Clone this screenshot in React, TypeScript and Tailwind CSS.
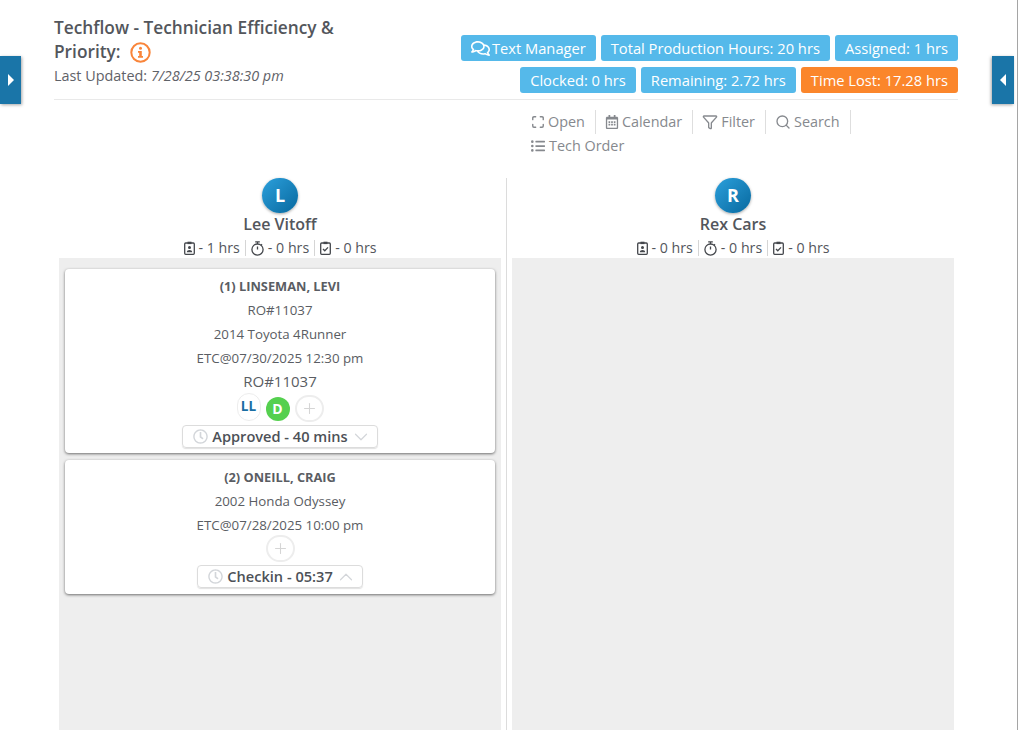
import { ChevronDown, ChevronUp, Filter, Maximize, Plus, Search } from "lucide-react";
import { FaRegCalendarAlt, FaRegClock, FaRegComments, FaListUl } from "react-icons/fa";
import type { ReactNode } from "react";

function Pill({ children, orange }: { children: ReactNode; orange?: boolean }) {
  return (
    <span
      className={`flex h-[26px] items-center rounded-[3px] px-[10px] text-[14.7px] text-white ${
        orange ? "bg-[#fb862b]" : "bg-[#55b9ea]"
      }`}
    >
      {children}
    </span>
  );
}

function ToolItem({ icon, label, last }: { icon: ReactNode; label: string; last?: boolean }) {
  return (
    <span className={`flex h-6 items-center gap-[3px] px-[10px] text-[14.4px] text-[#86898e] ${last ? "" : "border-r border-[#dedede]"}`}>
      {icon}
      {label}
    </span>
  );
}

function ClipboardUser() {
  return (
    <svg width="11" height="14" viewBox="0 0 11 14" fill="none" stroke="#44474c" strokeWidth="1.3">
      <rect x="0.7" y="2" width="9.6" height="11.3" rx="1" />
      <rect x="3.5" y="0.7" width="4" height="2.4" fill="#44474c" stroke="none" />
      <circle cx="5.5" cy="6.5" r="1.5" fill="#44474c" stroke="none" />
      <path d="M2.8 11.2c0-3 5.4-3 5.4 0z" fill="#44474c" stroke="none" />
    </svg>
  );
}

function Stopwatch() {
  return (
    <svg width="13" height="15" viewBox="0 0 13 15" fill="none" stroke="#44474c" strokeWidth="1.3">
      <circle cx="6.5" cy="8.6" r="5.6" />
      <path d="M4.2 0.8h4.6M6.5 0.8v2.2M6.5 8.6V5.4M11 3.2l-1 1" />
    </svg>
  );
}

function ClipboardTick() {
  return (
    <svg width="11" height="14" viewBox="0 0 11 14" fill="none" stroke="#44474c" strokeWidth="1.3">
      <rect x="0.7" y="2" width="9.6" height="11.3" rx="1" />
      <rect x="3.5" y="0.7" width="4" height="2.4" fill="#44474c" stroke="none" />
      <path d="M3 8l1.8 1.8L8 6.4" />
    </svg>
  );
}

function InfoIcon() {
  return (
    <svg width="21" height="21" viewBox="0 0 21 21" className="ml-[9px] inline -translate-y-[1px]">
      <circle cx="10.5" cy="10.5" r="9.2" fill="none" stroke="#f9853a" strokeWidth="2" />
      <circle cx="10.5" cy="6.3" r="1.5" fill="#f9853a" />
      <path d="M8 9h3.8v5h1.2v1.8H8V14h1.2v-3.2H8z" fill="#f9853a" />
    </svg>
  );
}

function Stats({ hours }: { hours: number }) {
  return (
    <div className="flex items-center justify-center text-[14.2px] leading-[16px] text-[#53565c]">
      <span className="flex items-center gap-[4px] border-r border-[#d5d5d5] pr-[5px]">
        <ClipboardUser />- {hours} hrs
      </span>
      <span className="flex items-center gap-[4px] border-r border-[#d5d5d5] px-[5px]">
        <Stopwatch />- 0 hrs
      </span>
      <span className="flex items-center gap-[4px] pl-[5px]">
        <ClipboardTick />- 0 hrs
      </span>
    </div>
  );
}

function Avatar({ letter }: { letter: string }) {
  return (
    <div className="flex h-[35px] w-9 items-center justify-center rounded-full bg-gradient-to-br from-[#2ba0dc] to-[#06699f] text-[18px] font-bold text-white shadow-[0_1px_3px_rgba(0,0,0,0.35)]">
      {letter}
    </div>
  );
}

function AddCircle() {
  return (
    <span className="flex h-[27px] w-[29px] items-center justify-center rounded-full border-2 border-[#ededed] bg-white text-[#d5d5d5]">
      <Plus size={17} strokeWidth={1.5} />
    </span>
  );
}

function StatusButton({ label, up }: { label: string; up?: boolean }) {
  return (
    <div className="mx-auto flex h-[23px] w-fit items-center gap-[4px] rounded-[4px] border border-[#dcdcdc] pr-[5px] pl-[10px] text-[14.6px] font-semibold text-[#4d5157] shadow-[0_1px_1px_rgba(0,0,0,0.12)]">
      <FaRegClock size={15} className="text-[#d3d6da]" />
      {label}
      {up ? (
        <ChevronUp size={22} strokeWidth={1.3} className="-ml-[2px] text-[#d3d6da]" />
      ) : (
        <ChevronDown size={22} strokeWidth={1.3} className="-ml-[2px] text-[#d3d6da]" />
      )}
    </div>
  );
}

function Card({ children, className }: { children: ReactNode; className?: string }) {
  return (
    <div className={`rounded-[4px] bg-white pt-[5px] text-center text-[13.3px] text-[#5a5d63] shadow-[0_1px_3px_rgba(0,0,0,0.55)] ${className}`}>
      {children}
    </div>
  );
}

function Line({ children, bold }: { children: ReactNode; bold?: boolean }) {
  return <div className={`h-6 leading-6 ${bold ? "text-[12.8px] font-bold" : ""}`}>{children}</div>;
}

export default function App() {
  return (
    <div className="relative h-[730px] overflow-hidden border-r border-[#a5a5a5] bg-white pl-[54px] pr-[59px] font-['Open_Sans',sans-serif]">
      <div className="absolute top-[56px] left-0 flex h-12 w-[21px] items-center justify-center bg-[#1a75a8] shadow-[1px_1px_3px_rgba(0,0,0,0.35)]">
        <span className="border-y-[6px] border-l-[6px] border-y-transparent border-l-white" />
      </div>
      <div className="absolute top-[56px] left-[992px] flex h-12 w-[22px] items-center justify-center bg-[#1a75a8] shadow-[-1px_1px_3px_rgba(0,0,0,0.35)]">
        <span className="border-y-[6px] border-r-[6px] border-y-transparent border-r-white" />
      </div>

      <header className="flex justify-between border-b border-[#e9e9e9] pt-[16px] pb-[6px]">
        <div className="w-[300px]">
          <h1 className="text-[17.3px] leading-[24px] font-semibold text-[#53565c]">
            Techflow - Technician Efficiency &amp; Priority:
            <InfoIcon />
          </h1>
          <p className="mt-[1px] text-[14.4px] leading-[22px] text-[#5f6268]">
            Last Updated: <em>7/28/25 03:38:30 pm</em>
          </p>
        </div>
        <div className="flex flex-col items-end gap-[6px] pt-[19px]">
          <div className="flex gap-[5px]">
            <Pill>
              <FaRegComments size={19} className="mr-[2px]" />
              Text Manager
            </Pill>
            <Pill>Total Production Hours: 20 hrs</Pill>
            <Pill>Assigned: 1 hrs</Pill>
          </div>
          <div className="flex gap-[5px]">
            <Pill>Clocked: 0 hrs</Pill>
            <Pill>Remaining: 2.72 hrs</Pill>
            <Pill orange>Time Lost: 17.28 hrs</Pill>
          </div>
        </div>
      </header>

      <div className="ml-[467px] flex flex-wrap pt-[10px]">
        <ToolItem icon={<Maximize size={14} strokeWidth={2.4} />} label="Open" />
        <ToolItem icon={<FaRegCalendarAlt size={14} className="-ml-[1px]" />} label="Calendar" />
        <ToolItem icon={<Filter size={16} strokeWidth={2} className="-ml-[1px]" />} label="Filter" />
        <ToolItem icon={<Search size={16} strokeWidth={2} className="-ml-[1px]" />} label="Search" />
        <div className="w-full">
          <span className="flex h-6 items-center gap-[4px] px-[10px] text-[14.4px] text-[#86898e]">
            <FaListUl size={14} />
            Tech Order
          </span>
        </div>
      </div>

      <div className="mt-[20px] grid h-[552px] grid-cols-[453px_451px]">
        <section className="flex flex-col border-r border-[#dcdcdc] pl-[5px] pr-[5px]">
          <div className="flex flex-col items-center">
            <Avatar letter="L" />
            <div className="-mt-[1px] text-[16px] leading-[24px] font-semibold text-[#53565c]">Lee Vitoff</div>
            <div className="mt-[4px] h-[18px]">
              <Stats hours={1} />
            </div>
          </div>
          <div className="flex grow flex-col gap-[7px] bg-[#eeeeee] px-[6px] pt-[11px]">
            <Card className="pb-[5px]">
              <Line bold>(1) LINSEMAN, LEVI</Line>
              <Line>RO#11037</Line>
              <Line>2014 Toyota 4Runner</Line>
              <Line>ETC@07/30/2025 12:30 pm</Line>
              <div className="h-[25px] text-[15px] leading-[23px]">RO#11037</div>
              <div className="flex h-[26px] items-center justify-center gap-[5px]">
                <span className="-mt-[3px] flex h-[28px] w-[24px] items-center justify-center rounded-full border border-[#ededed] bg-white text-[13.5px] font-bold text-[#1a6ea3]">
                  LL
                </span>
                <span className="mt-[1px] flex h-[24px] w-[24px] items-center justify-center rounded-full bg-[#55d04f] text-[14px] font-bold text-white">
                  D
                </span>
                <AddCircle />
              </div>
              <div className="mt-[4px]">
                <StatusButton label="Approved - 40 mins" />
              </div>
            </Card>
            <Card className="pb-[6px]">
              <Line bold>(2) ONEILL, CRAIG</Line>
              <Line>2002 Honda Odyssey</Line>
              <Line>ETC@07/28/2025 10:00 pm</Line>
              <div className="-mt-[2px] flex h-[26px] items-center justify-center">
                <AddCircle />
              </div>
              <div className="mt-[4px]">
                <StatusButton label="Checkin - 05:37" up />
              </div>
            </Card>
          </div>
        </section>
        <section className="flex flex-col pl-[5px] pr-[4px]">
          <div className="flex flex-col items-center">
            <Avatar letter="R" />
            <div className="-mt-[1px] text-[16px] leading-[24px] font-semibold text-[#53565c]">Rex Cars</div>
            <div className="mt-[4px] h-[18px]">
              <Stats hours={0} />
            </div>
          </div>
          <div className="grow bg-[#eeeeee]" />
        </section>
      </div>
    </div>
  );
}
